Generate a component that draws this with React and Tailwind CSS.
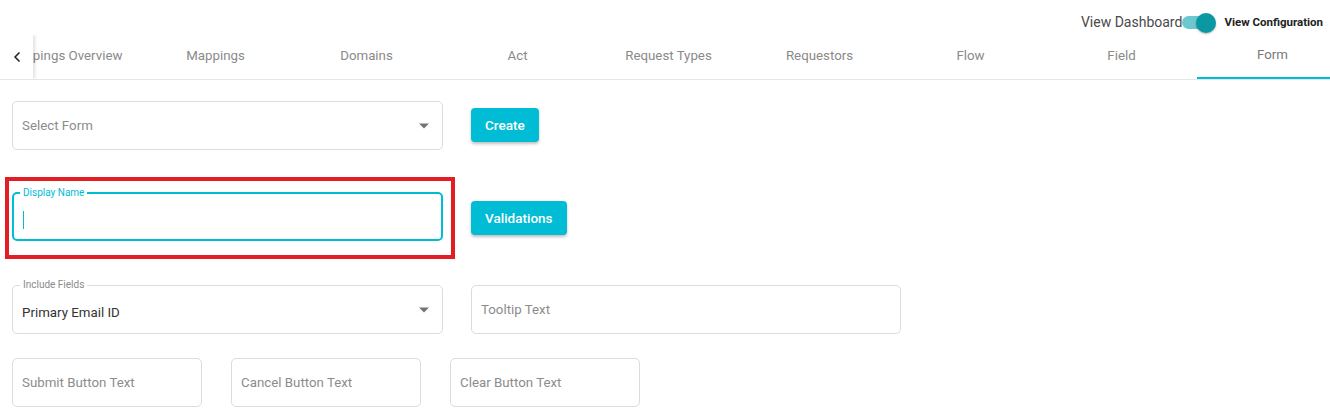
import { ChevronLeft } from 'lucide-react';

const tabs = ['Mappings Overview', 'Mappings', 'Domains', 'Act', 'Request Types', 'Requestors', 'Flow', 'Field', 'Form'];

const Arrow = () => (
    <span className="absolute right-[13px] top-1/2 -translate-y-1/2 w-0 h-0 border-l-[5px] border-r-[5px] border-t-[5px] border-l-transparent border-r-transparent border-t-[#757575]" />
);

const Outlined = ({ className = '', placeholder, label, value, select }) => (
    <div className={`relative h-[49px] border border-[#dcdcdc] rounded-[5px] bg-white flex items-center px-[9px] ${className}`}>
        {label && (
            <span className="absolute -top-[7px] left-[7px] px-[3px] bg-white text-[10px] leading-[12px] text-[#8a8a8a]">{label}</span>
        )}
        {value ? (
            <span className="text-[13.3px] text-[#333] mt-[6px]">{value}</span>
        ) : (
            <span className="text-[13.3px] text-[#8c8c8c]">{placeholder}</span>
        )}
        {select && <Arrow />}
    </div>
);

const Btn = ({ children, className = '' }) => (
    <button className={`h-[34px] px-[14px] rounded-[4px] bg-[#00bcd4] text-white text-[13.5px] font-medium shadow-[0_2px_3px_rgba(0,0,0,0.25)] ${className}`}>
        {children}
    </button>
);

export default function App() {
    return (
        <div className="w-[1330px] h-[410px] bg-white overflow-hidden" style={{ fontFamily: 'Roboto, "Liberation Sans", sans-serif' }}>
            {/* Header */}
            <div className="h-[35px] flex items-center justify-end pr-[7px] pt-[10px]">
                <span className="text-[14px] text-[#4a4a4a]">View Dashboard</span>
                <div className="relative w-[36px] h-[22px] flex items-center">
                    <div className="w-[29px] h-[13px] rounded-full bg-[#6cc8ce]" />
                    <div className="absolute left-[14px] top-[1px] w-[20px] h-[20px] rounded-full bg-[#0a98a3] shadow-[0_1px_2px_rgba(0,0,0,0.3)]" />
                </div>
                <span className="ml-[6px] text-[11.5px] font-bold text-[#222]">View Configuration</span>
            </div>

            {/* Tabs */}
            <div className="relative h-[45px] border-b border-[#e6e6e6] flex overflow-hidden">
                <div className="w-[33px] shrink-0 flex items-center justify-center bg-white z-10 shadow-[2px_0_3px_rgba(0,0,0,0.12)]">
                    <ChevronLeft className="w-[16px] h-[16px] text-[#222]" strokeWidth={2.5} />
                </div>
                <div className="flex -ml-[44px]">
                    {tabs.map((t) => (
                        <div
                            key={t}
                            className={`w-[151px] shrink-0 flex items-center justify-center text-[13.3px] pb-[2px] ${t === 'Form' ? 'text-[#7a7a7a] border-b-2 border-[#00bcd4]' : 'text-[#8a8a8a]'}`}
                        >
                            {t}
                        </div>
                    ))}
                </div>
            </div>

            {/* Form */}
            <div className="pl-[12px] pt-[21px]">
                <div className="flex items-start">
                    <Outlined className="w-[431px]" placeholder="Select Form" select />
                    <Btn className="ml-[28px] mt-[7px]">Create</Btn>
                </div>

                <div className="flex items-center mt-[27px]">
                    <div className="-ml-[7px] border-4 border-[#e21d24] pl-[3px] pr-[8px] pt-[11px] pb-[14px]">
                        <div className="relative w-[431px] h-[49px] border-2 border-[#00bcd4] rounded-[5px] flex items-center px-[9px]">
                            <span className="absolute -top-[7px] left-[6px] px-[3px] bg-white text-[10px] leading-[12px] text-[#00bcd4]">Display Name</span>
                            <span className="w-px h-[18px] bg-[#00bcd4] mt-[6px]" />
                        </div>
                    </div>
                    <Btn className="ml-[16px]">Validations</Btn>
                </div>

                <div className="flex mt-[26px]">
                    <Outlined className="w-[431px]" label="Include Fields" value="Primary Email ID" select />
                    <Outlined className="w-[430px] ml-[28px]" placeholder="Tooltip Text" />
                </div>

                <div className="flex mt-[24px] gap-[29px]">
                    <Outlined className="w-[190px]" placeholder="Submit Button Text" />
                    <Outlined className="w-[190px]" placeholder="Cancel Button Text" />
                    <Outlined className="w-[190px]" placeholder="Clear Button Text" />
                </div>
            </div>
        </div>
    );
}
